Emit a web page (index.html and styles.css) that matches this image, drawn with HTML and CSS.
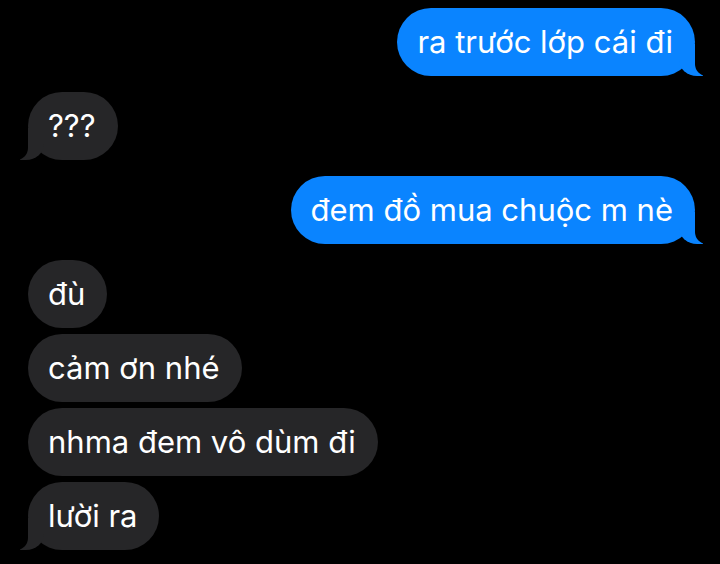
FILE: index.html
```html
<!DOCTYPE html>
<html lang="vi">

<head>
    <meta charset="UTF-8">
    <meta name="viewport" content="width=device-width, initial-scale=1.0">
    <title>Tin nhắn</title>
    <link rel="stylesheet" href="styles.css">
</head>

<body>

    <div class="chat">
        <!-- sent -->
        <div class="group sent">
            <div class="bubble tail">ra trước lớp cái đi</div>
        </div>

        <!-- received -->
        <div class="group received">
            <div class="bubble tail">???</div>
        </div>

        <div class="group sent">
            <div class="bubble tail">đem đồ mua chuộc m nè</div>
        </div>

        <div class="group received">
            <div class="bubble">đù</div>
            <div class="bubble">cảm ơn nhé</div>
            <div class="bubble">nhma đem vô dùm đi</div>
            <div class="bubble tail">lười ra</div>
        </div>
    </div>

</body>

</html>
```

FILE: styles.css
```css
body {
    margin: 0;
    padding: 0;
    background-color: #000;
    font-family: Inter, "Liberation Sans", Arial, sans-serif;
    color: #fff;
}

.chat {
    display: flex;
    flex-direction: column;
    gap: 16px;
    padding: 8px 25px 0 28px;
}

.group {
    display: flex;
    flex-direction: column;
    gap: 6px;
}

.group.sent {
    align-items: flex-end;
}

.group.received {
    align-items: flex-start;
}

.bubble {
    position: relative;
    height: 68px;
    line-height: 67px;
    padding: 0 22px 0 20px;
    border-radius: 34px;
    font-size: 31px;
    white-space: nowrap;
    box-sizing: border-box;
}

.sent .bubble {
    background-color: #0a84ff;
}

.received .bubble {
    background-color: #262628;
}

/* tails */
.bubble.tail::before,
.bubble.tail::after {
    content: "";
    position: absolute;
    bottom: 0;
    height: 32px;
}

.sent .bubble.tail::before {
    right: -8px;
    width: 24px;
    background-color: #0a84ff;
    border-bottom-left-radius: 18px 16px;
}

.sent .bubble.tail::after {
    right: -26px;
    width: 26px;
    background-color: #000;
    border-bottom-left-radius: 12px;
}

.received .bubble.tail::before {
    left: -8px;
    width: 24px;
    background-color: #262628;
    border-bottom-right-radius: 18px 16px;
}

.received .bubble.tail::after {
    left: -26px;
    width: 26px;
    background-color: #000;
    border-bottom-right-radius: 12px;
}
```
